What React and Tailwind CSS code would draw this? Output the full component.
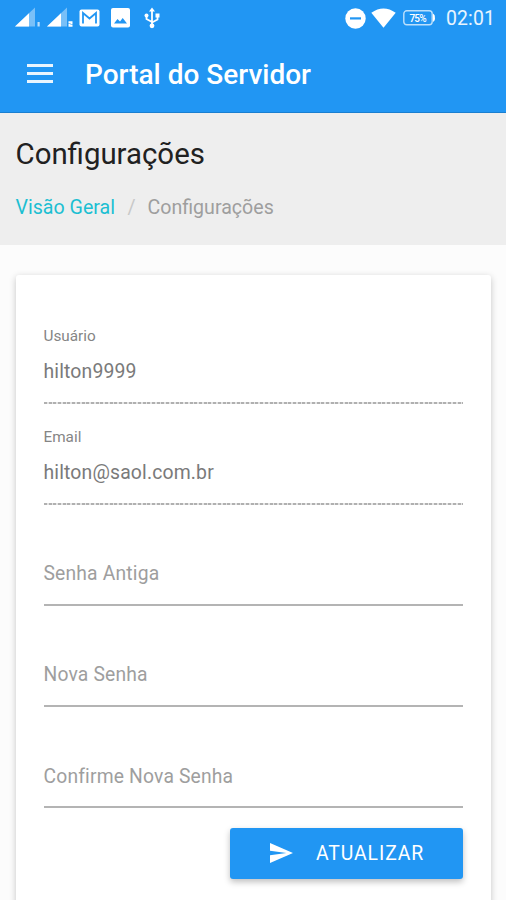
function SignalIcon({ sim }) {
  return (
    <svg width="30" height="22" viewBox="0 0 30 22" fill="white">
      <path d="M0 19.5 L20 0.5 V19.5 Z" opacity="0.4" />
      <path d="M0 19.5 L14 6.2 V19.5 Z" />
      {sim === 1 ? (
        <path d="M22.5 15h2.2v4.5h-2.2z" opacity="0.7" />
      ) : (
        <path d="M21.5 14.3h4v3.2h-2.2v.6h2.2v1.6h-4v-3.2h2.2v-.6h-2.2z" />
      )}
    </svg>
  );
}

function StatusBar() {
  return (
    <div className="flex h-9 items-center pl-[15px] text-white">
      <div className="flex w-[64px] shrink-0">
        <div className="w-8 shrink-0"><SignalIcon sim={1} /></div>
        <div className="w-8 shrink-0"><SignalIcon sim={2} /></div>
      </div>
      <svg className="shrink-0" width="21" height="18" viewBox="0 0 21 18">
        <rect x="0.5" y="0.5" width="20" height="17" rx="2" fill="white" />
        <path d="M4 14.5V4L10.5 9.5L17 4V14.5" fill="none" stroke="#2196f3" strokeWidth="1.8" />
      </svg>
      <svg className="ml-[11px] shrink-0" width="19" height="20" viewBox="0 0 19 20">
        <rect width="19" height="19.5" rx="2" fill="white" />
        <path d="M3 15.5l3.5-4.5 2.5 2.5 2.7-3.5 4.3 5.5z" fill="#2196f3" />
      </svg>
      <svg className="ml-[14px] shrink-0" width="16" height="22" viewBox="0 0 16 22" fill="white">
        <path d="M8 0.5L5 4.5h6z" />
        <circle cx="8" cy="18.8" r="2.4" />
        <circle cx="2.5" cy="8.5" r="2" />
        <rect x="11.5" y="6.5" width="4" height="4" />
        <path d="M8 3V18M2.5 8v4l5.5 3M13.5 9v3.5L8 15.5" fill="none" stroke="white" strokeWidth="1.8" />
      </svg>
      <svg className="ml-[185px] shrink-0" width="21" height="21" viewBox="0 0 21 21">
        <circle cx="10.5" cy="10.5" r="10.2" fill="white" />
        <rect x="5" y="9.3" width="11" height="2.2" fill="#2196f3" />
      </svg>
      <svg className="ml-[5px] shrink-0" width="25" height="20" viewBox="0 0 25 20">
        <path d="M0.3 4.8Q12.5 -4 24.7 4.8L12.5 19.8Z" fill="white" />
      </svg>
      <svg className="ml-[7px] shrink-0" width="33" height="16" viewBox="0 0 33 16">
        <rect x="0.8" y="0.8" width="28.4" height="14" rx="3" fill="none" stroke="white" strokeOpacity="0.7" strokeWidth="1.4" />
        <path d="M30 4c2 .5 2 7 0 7.5" fill="white" stroke="white" strokeWidth="1" />
        <text x="15" y="11.5" textAnchor="middle" fill="white" fontFamily="Roboto, sans-serif" fontSize="10" fontWeight="500" textLength="17">75%</text>
      </svg>
      <span className="ml-[10px] pt-px text-[19.4px] tracking-[0.15px] text-white/90">02:01</span>
    </div>
  );
}

function Field({ label, value, disabled }) {
  return (
    <div className="flex h-[101.2px] flex-col">
      <div className="h-[27px] text-[15.3px] leading-[27px] text-[#858585]">{disabled ? label : ""}</div>
      <div className={disabled ? "flex h-[51.5px] items-center pb-[8px] text-[19.4px] tracking-[0.15px] text-[#7a7a7a]" : "flex h-[51.5px] items-center pb-[7px] text-[19.3px] tracking-[0.17px] text-[#9e9e9e]"}>
        {disabled ? value : label}
      </div>
      <div className={disabled ? "h-[2px] bg-[repeating-linear-gradient(90deg,#b0b0b0_0px,#b0b0b0_3px,#e4e4e4_3px,#e4e4e4_4.7px)]" : "h-[2px] bg-[#b4b4b4]"} />
    </div>
  );
}

export default function App() {
  return (
    <div className="flex h-[900px] w-[506px] flex-col overflow-hidden bg-[#fcfcfc] font-[Roboto,sans-serif]">
      <header className="h-[113px] shrink-0 border-b border-[#1a7fd0] bg-[#2196f3]">
        <StatusBar />
        <div className="flex h-[76px] items-center pl-[27px]">
          <div className="-mt-px flex w-[26px] flex-col gap-[5px]">
            <div className="h-[3px] bg-white/90" />
            <div className="h-[3px] bg-white/90" />
            <div className="h-[3px] bg-white/90" />
          </div>
          <h1 className="ml-8 pt-[2px] text-[28px] font-medium text-white">Portal do Servidor</h1>
        </div>
      </header>
      <section className="h-[132px] shrink-0 bg-[#eeeeee] px-[15.5px] pt-[20.5px]">
        <h2 className="text-[29.4px] leading-10 text-[#212121]">Configurações</h2>
        <nav className="mt-5 flex text-[19.6px] leading-7">
          <span className="w-[112px] text-[#1cbfd2]">Visão Geral</span>
          <span className="w-5 text-[#c8c8c8]">/</span>
          <span className="text-[#9e9e9e]">Configurações</span>
        </nav>
      </section>
      <main className="ml-4 mt-[30px] h-[700px] w-[475px] shrink-0 rounded-t-[3px] bg-white pl-[27.5px] pr-7 pt-12 shadow-[0_2px_7px_rgba(0,0,0,0.22)]">
        <Field label="Usuário" value="hilton9999" disabled />
        <Field label="Email" value="hilton@saol.com.br" disabled />
        <Field label="Senha Antiga" />
        <Field label="Nova Senha" />
        <Field label="Confirme Nova Senha" />
        <button className="-mt-px ml-auto flex h-[51px] w-[233px] items-center rounded-[3px] bg-[#2196f3] pl-[40px] text-white shadow-[0_3px_6px_rgba(0,0,0,0.25)]">
          <svg width="23" height="20" viewBox="2 3 21 18" preserveAspectRatio="none" fill="white">
            <path d="M2.01 21L23 12 2.01 3 2 10l15 2-15 2z" />
          </svg>
          <span className="ml-[23px] text-[19.4px] tracking-[0.9px]">ATUALIZAR</span>
        </button>
      </main>
    </div>
  );
}
